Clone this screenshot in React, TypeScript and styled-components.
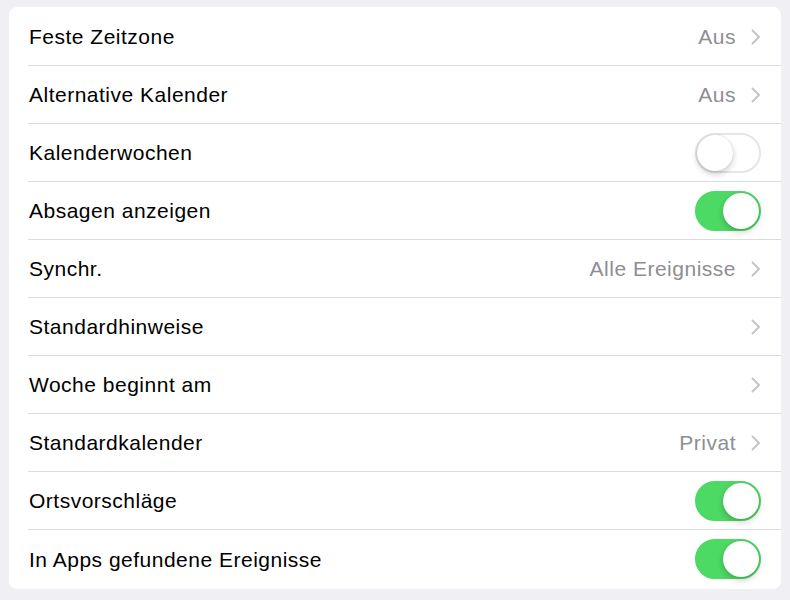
import React, { useState } from 'react';
import styled, { createGlobalStyle } from 'styled-components';

const GlobalStyle = createGlobalStyle`
  html, body {
    margin: 0;
    padding: 0;
    background: #efeff4;
    font-family: 'Liberation Sans', Arial, sans-serif;
  }
`;

type Item =
  | { kind: 'link'; label: string; value?: string }
  | { kind: 'toggle'; label: string; on: boolean };

const items: Item[] = [
  { kind: 'link', label: 'Feste Zeitzone', value: 'Aus' },
  { kind: 'link', label: 'Alternative Kalender', value: 'Aus' },
  { kind: 'toggle', label: 'Kalenderwochen', on: false },
  { kind: 'toggle', label: 'Absagen anzeigen', on: true },
  { kind: 'link', label: 'Synchr.', value: 'Alle Ereignisse' },
  { kind: 'link', label: 'Standardhinweise' },
  { kind: 'link', label: 'Woche beginnt am' },
  { kind: 'link', label: 'Standardkalender', value: 'Privat' },
  { kind: 'toggle', label: 'Ortsvorschläge', on: true },
  { kind: 'toggle', label: 'In Apps gefundene Ereignisse', on: true },
];

function Chevron() {
  return (
    <svg width="10" height="16" viewBox="0 0 10 16">
      <path d="M1.5 1.5 L8 8 L1.5 14.5" fill="none" stroke="#c4c4c9" strokeWidth="2" strokeLinecap="round" strokeLinejoin="round" />
    </svg>
  );
}

function Toggle({ initial }: { initial: boolean }) {
  const [on, setOn] = useState(initial);
  return (
    <Track on={on} onClick={() => setOn(!on)}>
      <Knob on={on} />
    </Track>
  );
}

function App() {
  return (
    <Page>
      <GlobalStyle />
      <Card>
        {items.map((item, i) => (
          <Row key={item.label} last={i === items.length - 1}>
            <Label>{item.label}</Label>
            {item.kind === 'link' ? (
              <Accessory>
                {item.value && <Value>{item.value}</Value>}
                <Chevron />
              </Accessory>
            ) : (
              <Toggle initial={item.on} />
            )}
          </Row>
        ))}
      </Card>
    </Page>
  );
}

const Page = styled.div`
  width: 790px;
  height: 600px;
  box-sizing: border-box;
  padding: 7px 9px 0 9px;
`;

const Card = styled.div`
  background: #ffffff;
  border-radius: 8px;
  overflow: hidden;
  padding: 1px 0 1px 19px;
`;

const Row = styled.div<{ last: boolean }>`
  height: 58px;
  box-sizing: border-box;
  display: flex;
  align-items: center;
  justify-content: space-between;
  padding-right: 20px;
  border-bottom: ${(p) => (p.last ? 'none' : '1px solid #dcdce0')};
`;

const Label = styled.span`
  font-size: 21px;
  letter-spacing: 0.5px;
  color: #000000;
  padding-left: 1px;
  padding-top: 1px;
`;

const Accessory = styled.div`
  display: flex;
  align-items: center;
  gap: 15px;
`;

const Value = styled.span`
  font-size: 21px;
  letter-spacing: 0.5px;
  color: #8e8e93;
  padding-top: 1px;
`;

const Track = styled.div<{ on: boolean }>`
  position: relative;
  width: 66px;
  height: 40px;
  box-sizing: border-box;
  border-radius: 20px;
  background: ${(p) => (p.on ? '#4cd964' : '#ffffff')};
  border: ${(p) => (p.on ? '2px solid #4cd964' : '2px solid #e5e5ea')};
  cursor: pointer;
`;

const Knob = styled.div<{ on: boolean }>`
  position: absolute;
  top: 0;
  left: ${(p) => (p.on ? '26px' : '0')};
  width: 36px;
  height: 36px;
  border-radius: 50%;
  background: #ffffff;
  box-shadow: 0 3px 6px rgba(0, 0, 0, 0.2), 0 0 1px rgba(0, 0, 0, 0.2);
`;

export default App;
